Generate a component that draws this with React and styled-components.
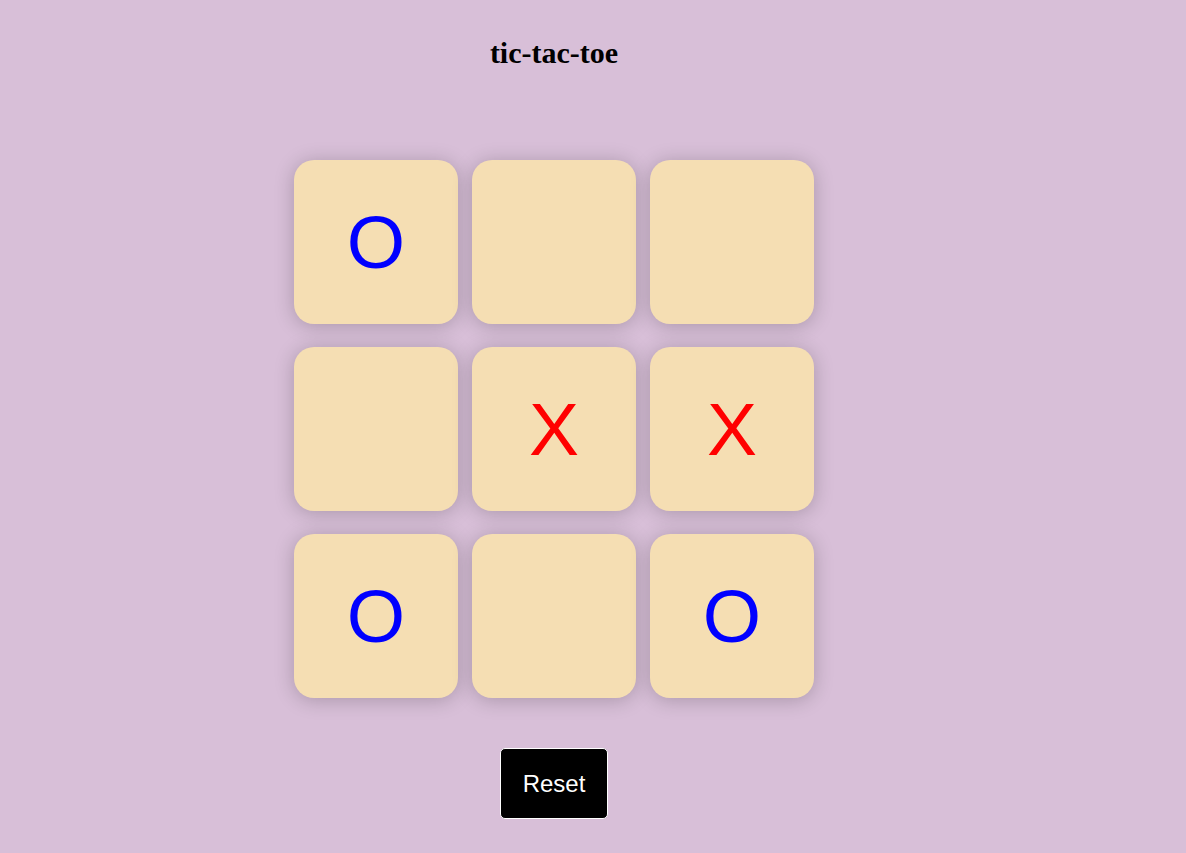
import React, { useState } from "react";
import styled, { createGlobalStyle } from "styled-components";

const GlobalStyle = createGlobalStyle`
  body {
    margin: 0;
    background-color: thistle;
  }
`;

const Page = styled.div`
  width: 1108px;
  min-height: 853px;
  display: flex;
  flex-direction: column;
  align-items: center;
`;

const Title = styled.h1`
  margin: 36px 0 0;
  font-family: "Liberation Serif", serif;
  font-size: 30px;
  line-height: 34px;
  font-weight: 700;
  color: #000;
`;

const Board = styled.div`
  margin-top: 90px;
  display: grid;
  grid-template-columns: repeat(3, 164px);
  grid-auto-rows: 164px;
  column-gap: 14px;
  row-gap: 23px;
`;

const Tile = styled.div`
  background-color: wheat;
  border-radius: 20px;
  box-shadow: 0 2px 20px rgba(0, 0, 0, 0.22);
  display: flex;
  justify-content: center;
  align-items: center;
  font-family: "Liberation Sans", Arial, sans-serif;
  font-size: 75px;
  color: ${props => (props.mark === "X" ? "red" : "blue")};
  cursor: pointer;
  user-select: none;
`;

const ResetButton = styled.button`
  margin-top: 50px;
  padding: 20px 22px;
  background-color: #000;
  color: #fff;
  border: 1px solid #fff;
  border-radius: 5px;
  font-family: "Liberation Sans", Arial, sans-serif;
  font-size: 24px;
  line-height: 29px;
  cursor: pointer;
`;

const START = ["O", "", "", "", "X", "X", "O", "", "O"];

export default function App() {
  const [cells, setCells] = useState(START);

  const onReset = () => setCells(Array(9).fill(""));

  return (
    <Page>
      <GlobalStyle />
      <Title>tic-tac-toe</Title>
      <Board>
        {cells.map((mark, i) => (
          <Tile key={i} mark={mark}>
            {mark}
          </Tile>
        ))}
      </Board>
      <ResetButton onClick={onReset}>Reset</ResetButton>
    </Page>
  );
}
